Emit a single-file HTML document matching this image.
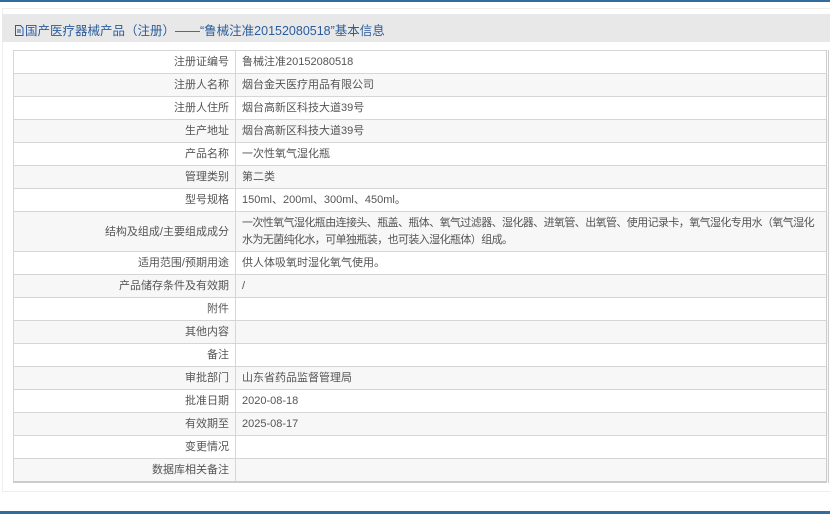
<!DOCTYPE html>
<html><head><meta charset="utf-8"><style>
html,body{margin:0;padding:0;background:#fff;width:830px;height:514px;overflow:hidden;font-family:"Liberation Sans","Noto Sans CJK SC",sans-serif;}
.top{position:absolute;left:0;top:0;width:830px;height:2px;background:#2f6c9f;}
.bot{position:absolute;left:0;top:511px;width:830px;height:3px;background:#2f6c9f;}
.panel{position:absolute;left:2px;top:8px;width:830px;height:482px;background:#fff;border:1px solid #eee;border-right:none;}
.hd{position:absolute;left:2px;top:14px;width:828px;height:28px;background:#e8e8e8;}
.hd span{position:absolute;left:12px;top:6px;font-size:12.5px;color:#2a5c9c;white-space:nowrap;}
table{position:absolute;left:13px;top:50px;width:816px;border-collapse:collapse;font-size:11px;color:#555;border-right:3px double #ccc;border-bottom:2px solid #ccc;}
td{border:1px solid #d6d6d6;height:22px;padding:0 6px;line-height:16px;}
td.l{width:209px;text-align:right;}
tr:nth-child(even) td{background:#f7f7f7;}
</style></head><body>
<div class="top"></div>
<div class="panel"></div>
<div class="hd"><span><svg width="10" height="11" viewBox="0 0 10 11" style="vertical-align:-1px;margin-right:1px"><path d="M1.5 .5h5l2.5 2.5v7.5h-7.5z" fill="none" stroke="#2a5c9c"/><path d="M3 5h4M3 7h4" stroke="#2a5c9c"/></svg>国产医疗器械产品（注册）——“鲁械注准20152080518”基本信息</span></div>
<table>
<tr><td class="l">注册证编号</td><td>鲁械注准20152080518</td></tr>
<tr><td class="l">注册人名称</td><td>烟台金天医疗用品有限公司</td></tr>
<tr><td class="l">注册人住所</td><td>烟台高新区科技大道39号</td></tr>
<tr><td class="l">生产地址</td><td>烟台高新区科技大道39号</td></tr>
<tr><td class="l">产品名称</td><td>一次性氧气湿化瓶</td></tr>
<tr><td class="l">管理类别</td><td>第二类</td></tr>
<tr><td class="l">型号规格</td><td>150ml、200ml、300ml、450ml。</td></tr>
<tr><td class="l" style="height:39px">结构及组成/主要组成成分</td><td style="line-height:17px;letter-spacing:-0.6px">一次性氧气湿化瓶由连接头、瓶盖、瓶体、氧气过滤器、湿化器、进氧管、出氧管、使用记录卡，氧气湿化专用水（氧气湿化水为无菌纯化水，可单独瓶装，也可装入湿化瓶体）组成。</td></tr>
<tr><td class="l">适用范围/预期用途</td><td>供人体吸氧时湿化氧气使用。</td></tr>
<tr><td class="l">产品储存条件及有效期</td><td>/</td></tr>
<tr><td class="l">附件</td><td></td></tr>
<tr><td class="l">其他内容</td><td></td></tr>
<tr><td class="l">备注</td><td></td></tr>
<tr><td class="l">审批部门</td><td>山东省药品监督管理局</td></tr>
<tr><td class="l">批准日期</td><td>2020-08-18</td></tr>
<tr><td class="l">有效期至</td><td>2025-08-17</td></tr>
<tr><td class="l">变更情况</td><td></td></tr>
<tr><td class="l">数据库相关备注</td><td></td></tr>
</table>
<div class="bot"></div>
</body></html>
